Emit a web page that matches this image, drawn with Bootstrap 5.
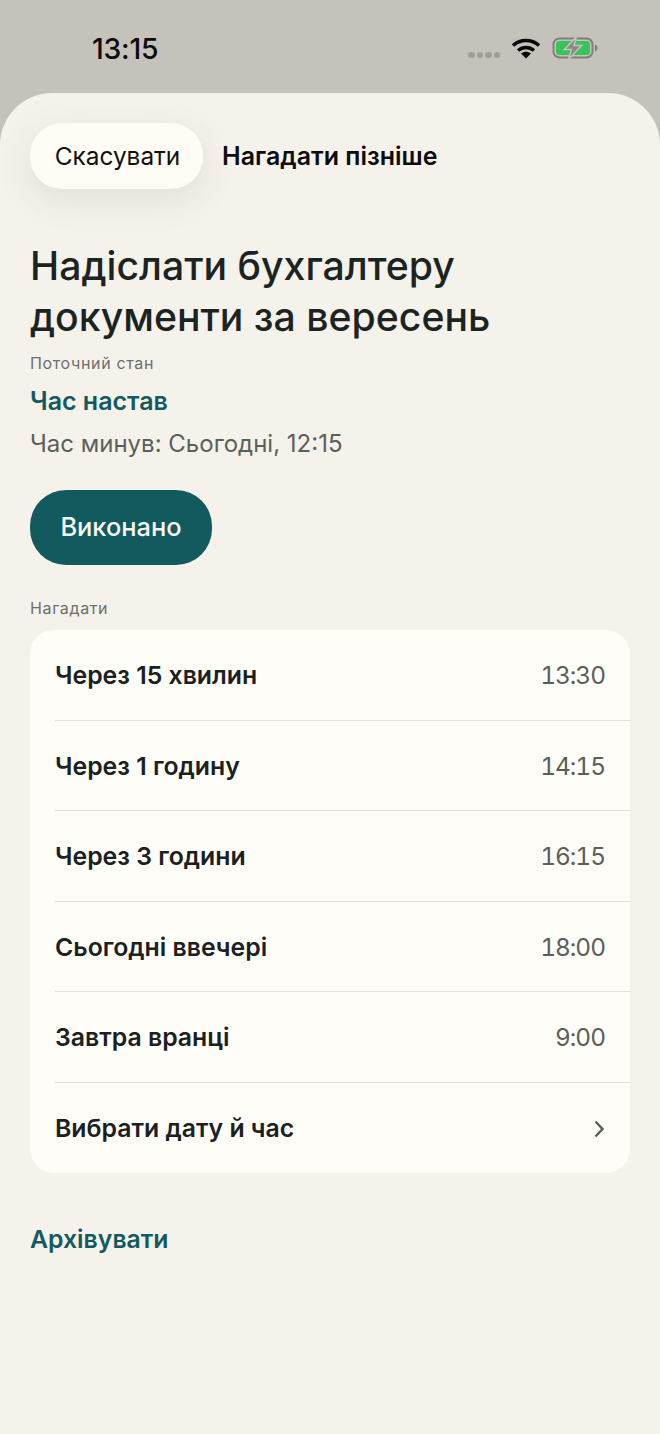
<!DOCTYPE html>
<html lang="uk">
<head>
<meta charset="utf-8">
<title>Нагадування</title>
<link href="https://cdn.jsdelivr.net/npm/bootstrap@5.3.0/dist/css/bootstrap.min.css" rel="stylesheet">
<style>
html,body{margin:0;height:1434px;overflow:hidden}
body{background:#c5c2bb;font-family:Inter,"Liberation Sans",sans-serif;color:#1a211f}
.status-zone{height:93px;padding:0 62px 0 92px}
.clock{font-size:28.300px;font-weight:500;color:#0c0c0c;letter-spacing:-.2px;line-height:1;margin-top:6px}
.status-icons{margin-top:2px}
.sig-dots{gap:2px;margin-top:15px;margin-right:11px}
.sig-dots i{display:block;width:6.500px;height:6.500px;border-radius:50%;background:#a09e99}
.wifi-glyph{margin-right:11px}
.sheet{height:1341px;background:#f5f2ec;border-radius:52px 52px 0 0;padding:30px 30px 0}
.pill-cancel{width:173px;height:66px;border-radius:32px;background:#fffbf5;border:0;font-size:24.400px;color:#111;padding:0 0 0 2px;box-shadow:0 10px 36px rgba(60,55,45,.1)}
.later-btn{font-size:25px;font-weight:600;color:#0d0d0d;margin-left:19px;padding-top:2px}
.main-title{font-size:39.200px;font-weight:500;line-height:51px;color:#1b2421;margin:51px 0 0}
.cap{font-size:16px;line-height:20px;color:#6c6f6b;letter-spacing:.65px}
.cap-state{margin-top:11px}
.state{font-size:25px;font-weight:600;color:#125a5e;line-height:30px;margin-top:13px}
.past{font-size:24px;color:#5b5f5c;line-height:30px;margin-top:13px}
.done-btn{width:182px;height:75px;border-radius:36px;background:#125a5e;color:#f7f7f2;border:0;font-size:25.400px;font-weight:500;padding:0;margin-top:31px}
.remind-cap{margin-top:33px;margin-bottom:12px}
.opt-card{background:#fffdf8;border-radius:24px;overflow:hidden}
.opt-row{height:90.500px;margin-left:25px;padding:2px 25px 0 0;border-bottom:1px solid #dfdeda;font-size:24.800px;font-weight:580;color:#1a211f}
.opt-row:last-child{border-bottom:0}
.opt-time{font-size:24.400px;font-weight:400;color:#5b5f5c;letter-spacing:-1px;font-variant-numeric:tabular-nums}
.archive{font-size:24.800px;font-weight:580;color:#125a5e;margin-top:51px;line-height:30px}
</style>
</head>
<body>
<div class="status-zone d-flex align-items-center justify-content-between">
  <div class="clock">13:15</div>
  <div class="status-icons d-flex align-items-center">
    <div class="sig-dots d-flex"><i></i><i></i><i></i><i></i></div>
    <svg class="wifi-glyph" width="30" height="24" viewBox="0 0 30 24" fill="none"><path d="M2 9.500C9.500 2.800 20.500 2.800 28 9.500" stroke="#0a0a0a" stroke-width="3.600"/><path d="M7 14.500C11.800 10.500 18.200 10.500 23 14.500" stroke="#0a0a0a" stroke-width="3.400"/><path d="M10 17.500C13 15 17 15 20 17.500L15 22.500Z" fill="#0a0a0a"/></svg>
    <svg width="46" height="24" viewBox="0 0 46 24"><rect x="1.500" y="2.500" width="39" height="19" rx="6" fill="none" stroke="#7f7e79" stroke-width="2"/><rect x="4" y="5" width="34" height="14" rx="3.500" fill="#38c35c"/><path d="M43 8.500c1.800.5 2.500 1.800 2.500 3.500s-.7 3-2.500 3.500z" fill="#7f7e79"/><path d="M24.500 0.500 12.500 13.500h7l-3 10 13-14h-7.500z" fill="#8b8a85" stroke="#c5c2bb" stroke-width="1.500"/></svg>
  </div>
</div>
<main class="sheet">
  <div class="d-flex align-items-center">
    <button type="button" class="btn pill-cancel">Скасувати</button>
    <span class="later-btn">Нагадати пізніше</span>
  </div>
  <h1 class="main-title">Надіслати бухгалтеру<br>документи за вересень</h1>
  <div class="cap cap-state">Поточний стан</div>
  <div class="state">Час настав</div>
  <div class="past">Час минув: Сьогодні, 12:15</div>
  <button type="button" class="btn done-btn">Виконано</button>
  <div class="cap remind-cap">Нагадати</div>
  <div class="opt-card">
    <div class="opt-row d-flex align-items-center justify-content-between"><span>Через 15 хвилин</span><span class="opt-time">13:30</span></div>
    <div class="opt-row d-flex align-items-center justify-content-between"><span>Через 1 годину</span><span class="opt-time">14:15</span></div>
    <div class="opt-row d-flex align-items-center justify-content-between"><span>Через 3 години</span><span class="opt-time">16:15</span></div>
    <div class="opt-row d-flex align-items-center justify-content-between"><span>Сьогодні ввечері</span><span class="opt-time">18:00</span></div>
    <div class="opt-row d-flex align-items-center justify-content-between"><span>Завтра вранці</span><span class="opt-time">9:00</span></div>
    <div class="opt-row d-flex align-items-center justify-content-between"><span>Вибрати дату й час</span>
      <svg width="14" height="20" viewBox="0 0 14 20" fill="none"><path d="M4.500 2.500 11.500 10 4.500 17.500" stroke="#5b5f5c" stroke-width="2.500"/></svg></div>
  </div>
  <div class="archive">Архівувати</div>
</main>
<script src="https://cdn.jsdelivr.net/npm/bootstrap@5.3.0/dist/js/bootstrap.bundle.min.js"></script>
</body>
</html>
